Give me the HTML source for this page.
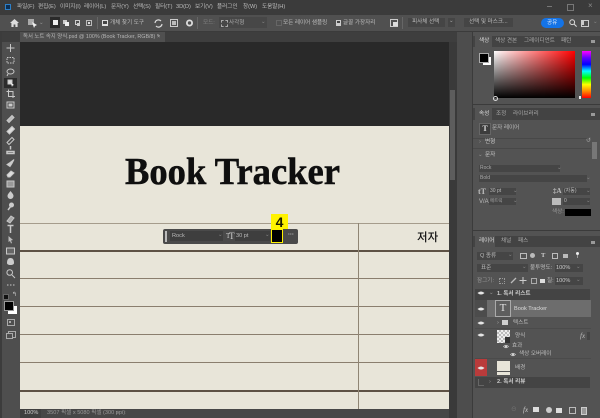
<!DOCTYPE html>
<html lang="ko"><head><meta charset="utf-8"><title>Photoshop</title>
<style>
html,body{margin:0;padding:0;background:#535353}
#r{position:relative;width:600px;height:418px;overflow:hidden;background:#4f4f4f;font-family:"Liberation Sans","Noto Sans CJK KR",sans-serif;color:#c4c4c4;filter:blur(.35px)}
#r div,#r svg{position:absolute}
.t{font-size:5.6px;line-height:8px;white-space:nowrap;color:#bdbdbd}
.l{background:#8a7e6e;height:1px;left:20px;width:429px}
.d{background:#5e5245;height:2px;left:20px;width:429px}
svg{overflow:visible}
</style></head><body><div id="r">

<!-- title bar -->
<div style="left:0;top:0;width:600px;height:15px;background:#3b3b3b"></div>
<div style="left:5px;top:4px;width:6px;height:6px;background:#0c2f54;border:1px solid #2d7fc7;box-sizing:border-box"></div>
<div class="t" style="left:17px;top:3px">파일(F)</div>
<div class="t" style="left:38px;top:3px">편집(E)</div>
<div class="t" style="left:60px;top:3px">이미지(I)</div>
<div class="t" style="left:84px;top:3px">레이어(L)</div>
<div class="t" style="left:111px;top:3px">문자(Y)</div>
<div class="t" style="left:133px;top:3px">선택(S)</div>
<div class="t" style="left:155px;top:3px">필터(T)</div>
<div class="t" style="left:176px;top:3px">3D(D)</div>
<div class="t" style="left:195px;top:3px">보기(V)</div>
<div class="t" style="left:217px;top:3px">플러그인</div>
<div class="t" style="left:243px;top:3px">창(W)</div>
<div class="t" style="left:262px;top:3px">도움말(H)</div>
<div style="left:547px;top:6px;width:5px;height:1px;background:#777"></div>
<div style="left:567px;top:4px;width:5px;height:5px;border:1px solid #777"></div>
<div class="t" style="left:588px;top:2px;font-size:8px;color:#888">×</div>

<!-- options bar -->
<div style="left:0;top:15px;width:600px;height:16px;background:#505050"></div>
<div style="left:0;top:31px;width:600px;height:1px;background:#3b3b3b"></div>
<svg style="left:10px;top:19px" width="9" height="8" viewBox="0 0 9 8"><path d="M4.5 0L9 4H7.6V8H5.4V5.5H3.6V8H1.4V4H0Z" fill="#ddd"/></svg>
<svg style="left:28px;top:19px" width="9" height="9" viewBox="0 0 9 9"><rect x="0" y="0" width="6" height="6" fill="#aaa"/><path d="M4 3L9 6 7 7 6 9Z" fill="#eee"/></svg>
<div class="t" style="left:39px;top:19px;color:#999">⌄</div>
<div style="left:50px;top:17px;width:10px;height:11px;background:#2a2a2a"></div>
<div style="left:53px;top:20px;width:5px;height:5px;background:#eee"></div>
<div style="left:63px;top:20px;width:4px;height:4px;background:#ccc"></div><div style="left:65px;top:22px;width:4px;height:4px;background:#eee"></div>
<div style="left:75px;top:20px;width:3px;height:3px;border:1px solid #ccc"></div><div style="left:77px;top:23px;width:3px;height:3px;background:#ccc"></div>
<div style="left:86px;top:20px;width:4px;height:4px;border:1px solid #bbb"></div><div style="left:88px;top:22px;width:2px;height:2px;background:#ddd"></div>
<div style="left:97px;top:17px;width:1px;height:12px;background:#666"></div>
<div style="left:102px;top:20px;width:6px;height:6px;background:#ddd"></div>
<div style="left:103px;top:21px;width:4px;height:3px;background:#444"></div>
<div class="t" style="left:110px;top:19px">개체 찾기 도구</div>
<svg style="left:154px;top:19px" width="9" height="9" viewBox="0 0 9 9"><path d="M1 4a3.5 3.5 0 0 1 6-2M8 5a3.5 3.5 0 0 1-6 2" stroke="#ddd" fill="none" stroke-width="1.2"/></svg>
<div style="left:170px;top:19px;width:6px;height:6px;border:1px solid #ccc"></div><div style="left:172px;top:21px;width:4px;height:4px;background:#bbb"></div>
<svg style="left:185px;top:18px" width="9" height="10" viewBox="0 0 9 10"><circle cx="4.5" cy="5" r="2.6" fill="none" stroke="#ddd" stroke-width="1.8"/></svg>
<div style="left:197px;top:17px;width:1px;height:12px;background:#666"></div>
<div class="t" style="left:203px;top:19px;color:#808080">모드:</div>
<div style="left:219px;top:17px;width:48px;height:11px;background:#474747"></div>
<div style="left:221px;top:20px;width:5px;height:5px;border:1px dashed #aaa"></div>
<div class="t" style="left:229px;top:19px;color:#aaa">사각형</div>
<div class="t" style="left:261px;top:18px;color:#888">⌄</div>
<div style="left:276px;top:20px;width:4px;height:4px;border:1px solid #666"></div>
<div class="t" style="left:283px;top:19px">모든 레이어 샘플링</div>
<div style="left:336px;top:20px;width:5px;height:6px;background:#ccc"></div>
<div style="left:337px;top:21px;width:3px;height:2px;background:#444"></div>
<div class="t" style="left:343px;top:19px">글꼴 가장자리</div>
<div style="left:390px;top:19px;width:6px;height:6px;border:1px solid #ccc"></div>
<div style="left:393px;top:22px;width:5px;height:4px;background:#ddd"></div>
<div style="left:402px;top:17px;width:1px;height:12px;background:#666"></div>
<div style="left:408px;top:18px;width:37px;height:9px;background:#454545"></div>
<div class="t" style="left:412px;top:18px">피사체 선택</div>
<div style="left:448px;top:18px;width:7px;height:9px;background:#454545"></div>
<div class="t" style="left:449px;top:17px;color:#aaa">⌄</div>
<div style="left:464px;top:18px;width:49px;height:9px;background:#454545"></div>
<div class="t" style="left:469px;top:18px">선택 및 마스크...</div>
<div style="left:541px;top:18px;width:23px;height:10px;background:#1473e6;border-radius:5px"></div>
<div class="t" style="left:547px;top:19px;color:#e8f0fa">공유</div>
<svg style="left:569px;top:19px" width="8" height="8" viewBox="0 0 8 8"><circle cx="3.2" cy="3.2" r="2.4" fill="none" stroke="#ddd"/><path d="M5 5L7.6 7.6" stroke="#ddd"/></svg>
<div style="left:581px;top:20px;width:6px;height:5px;border:1px solid #ccc"></div><div style="left:582px;top:21px;width:2px;height:4px;background:#ccc"></div>
<div class="t" style="left:593px;top:18px;color:#888">⌄</div>

<!-- doc tab -->
<div style="left:0;top:32px;width:473px;height:10px;background:#3e3e3e"></div>
<div style="left:20px;top:32px;width:145px;height:10px;background:#505050"></div>
<div class="t" style="left:23px;top:33px;color:#b5b5b5;font-size:5.4px">독서 노트 속지 양식.psd @ 100% (Book Tracker, RGB/8) *</div>
<div class="t" style="left:157px;top:33px;color:#bbb">×</div>

<!-- left toolbar -->
<div style="left:0;top:42px;width:20px;height:376px;background:#4e4e4e"></div>
<div style="left:0;top:32px;width:2px;height:386px;background:#3c3c3c"></div>
<div style="left:4px;top:78px;width:13px;height:10px;background:#2c2c2c"></div>
<svg style="left:0;top:0" width="20" height="418" viewBox="0 0 20 418" fill="none" stroke="#c8c8c8" stroke-width="1">
<path d="M10.500 44v8M6.500 48h8"/>
<rect x="7" y="57.500" width="7" height="5.500" stroke-dasharray="1.500 1"/>
<ellipse cx="10.500" cy="71.500" rx="3.500" ry="2.500"/><path d="M8 74l-1 2"/>
<path d="M8 80h4v4H8z" fill="#ddd"/><path d="M11 83l3 2-1.500.5-.5 1.500z" fill="#fff" stroke="none"/>
<path d="M8.500 89.500v7h6.500M6.500 91.500h6.500v6.500"/>
<rect x="7" y="102" width="7" height="6"/><rect x="9" y="104" width="3" height="2" fill="#ccc"/>
<path d="M7 120.500l5-5 2 2-5 5z" fill="#bbb"/>
<path d="M7 131.500l5-5 2.500 2.500-5 5z" fill="#ddd"/>
<path d="M7 142.500l5-5 2 2-5 5z"/>
<path d="M10.500 146v3.500M7 151.500h7v2H7z" stroke-width="1.500"/>
<path d="M7 164.500l3-2 4-3-2 4-2 3z" fill="#ccc"/>
<path d="M7 175l4-4 3 2-4 4H8z" fill="#ddd"/>
<rect x="7" y="181" width="7" height="6" fill="#999"/>
<path d="M10.500 191c2 2.500 3 3.500 3 5a3 3 0 0 1-6 0c0-1.500 1-2.500 3-5z" fill="#ccc" stroke="none"/>
<path d="M8 210l3-4" stroke-width="1.500"/><circle cx="11.500" cy="205" r="2.500" fill="#ccc" stroke="none"/>
<path d="M7 221l4-5 3 2-4 5z" fill="#aaa"/>
<path d="M7.500 225.500h6M10.500 225.500v7.500" stroke-width="1.500"/>
<path d="M8.500 236l4.500 4-2 .5 1 2.500-1 .5-1-2.500-1.500 1z" fill="#bbb" stroke="none"/>
<rect x="6.500" y="248" width="8" height="6" fill="#666"/>
<path d="M7 263c0-3 1-5 3.500-5s3.500 2 3.500 5c0 1-1 2-3.500 2S7 264 7 263z" fill="#ccc" stroke="none"/>
<circle cx="9.700" cy="272.500" r="2.800"/><path d="M12 275l3 3"/>
<path d="M7 285h1.500M10 285h1.500M13 285h1.500"/>
</svg>
<div style="left:3px;top:294px;width:4px;height:4px;background:#111;border:1px solid #666"></div>
<div class="t" style="left:12px;top:291px;font-size:6px;color:#ccc">↰</div>
<div style="left:8px;top:306px;width:9px;height:8px;background:#fff"></div>
<div style="left:4px;top:301px;width:8px;height:8px;background:#000;border:.5px solid #999"></div>
<div style="left:7px;top:319px;width:6px;height:5px;border:1px solid #aaa"></div>
<div style="left:9px;top:321px;width:2px;height:2px;background:#aaa"></div>
<div style="left:8px;top:331px;width:6px;height:5px;border:1px solid #aaa"></div>
<div style="left:6px;top:333px;width:5px;height:4px;border:1px solid #aaa;background:#4e4e4e"></div>

<!-- canvas -->
<div style="left:20px;top:42px;width:429px;height:84px;background:#292929"></div>
<div style="left:20px;top:126px;width:429px;height:283px;background:#e8e5d9"></div>
<div class="l" style="top:223px;background:#a59c8c"></div>
<div class="d" style="top:250px"></div>
<div class="l" style="top:278px"></div>
<div class="l" style="top:306px"></div>
<div class="l" style="top:334px"></div>
<div class="l" style="top:362px"></div>
<div class="d" style="top:390px"></div>
<div style="left:358px;top:223px;width:1px;height:186px;background:#8f8574"></div>
<svg style="left:0;top:0" width="600" height="418"><text x="125" y="184" font-family="'Liberation Serif',serif" font-weight="700" font-size="38" fill="#0f0f0f" stroke="#0f0f0f" stroke-width=".5" textLength="215" lengthAdjust="spacingAndGlyphs">Book Tracker</text></svg>
<div style="left:417px;top:230px;font-size:11.500px;line-height:15px;color:#111;font-weight:500;white-space:nowrap;font-family:'Noto Sans CJK KR',sans-serif">저자</div>

<!-- context bar -->
<div style="left:163px;top:229px;width:135px;height:15px;background:#4a4a4a;border-radius:2px"></div>
<div style="left:165px;top:231px;width:2px;height:11px;background:#bbb"></div>
<div style="left:170px;top:231px;width:53px;height:10px;background:#3e3e3e"></div>
<div class="t" style="left:172px;top:232px;color:#bbb">Rock</div>
<div class="t" style="left:218px;top:231px;color:#888">⌄</div>
<div class="t" style="left:226px;top:232px;font-size:7px;color:#ccc;font-family:'Liberation Serif',serif">T</div>
<div class="t" style="left:229px;top:232px;font-size:9px;color:#ccc;font-family:'Liberation Serif',serif">T</div>
<div style="left:235px;top:231px;width:35px;height:10px;background:#3e3e3e"></div>
<div class="t" style="left:236px;top:232px;color:#bbb">30 pt</div>
<div class="t" style="left:265px;top:231px;color:#888">⌄</div>
<div style="left:271px;top:214px;width:17px;height:15px;background:#fff200"></div>
<div style="left:271px;top:229px;width:12px;height:14px;background:#000;border:1.500px solid #fff200;box-sizing:border-box"></div>
<div style="left:271px;top:214px;width:17px;height:16px;text-align:center;font-size:14px;line-height:16px;font-weight:700;color:#1a1a00">4</div>
<div class="t" style="left:288px;top:231px;color:#ccc;font-size:6px;font-weight:700">···</div>

<!-- status bar -->
<div style="left:20px;top:409px;width:429px;height:9px;background:#474747"></div>
<div style="left:20px;top:409px;width:21px;height:9px;background:#3f3f3f"></div>
<div class="t" style="left:24px;top:409px;color:#ccc">100%</div>
<div class="t" style="left:47px;top:409px;color:#999">3507 픽셀 x 5080 픽셀 (300 ppi)</div>
<div class="t" style="left:116px;top:409px;color:#999">›</div>
<div class="t" style="left:124px;top:409px;color:#777">‹</div>

<!-- scrollbar & dark columns -->
<div style="left:449px;top:42px;width:8px;height:376px;background:#3a3a3a"></div>
<div style="left:450px;top:90px;width:5px;height:90px;background:#5d5d5d"></div>
<div style="left:457px;top:32px;width:16px;height:386px;background:#4d4d4d"></div>
<div style="left:472px;top:32px;width:1px;height:386px;background:#3b3b3b"></div>

<!-- right panels -->
<div style="left:473px;top:32px;width:127px;height:386px;background:#535353"></div>
<!-- color panel -->
<div style="left:473px;top:36px;width:127px;height:11px;background:#434343"></div>
<div style="left:475px;top:36px;width:17px;height:11px;background:#535353"></div>
<div class="t" style="left:479px;top:37px;color:#ddd">색상</div>
<div class="t" style="left:495px;top:37px;color:#aaa">색상 견본</div>
<div class="t" style="left:524px;top:37px;color:#aaa">그레이디언트</div>
<div class="t" style="left:561px;top:37px;color:#aaa">패턴</div>
<div style="left:591px;top:40px;width:4px;height:3px;background:#999"></div>
<div style="left:483px;top:57px;width:8px;height:8px;background:#fff"></div>
<div style="left:479px;top:53px;width:8px;height:8px;background:#000;border:.5px solid #aaa"></div>
<div style="left:494px;top:51px;width:81px;height:47px;background:linear-gradient(to bottom,transparent,#000),linear-gradient(to right,#fff,#f00)"></div>
<div style="left:582px;top:51px;width:9px;height:47px;background:linear-gradient(to bottom,#f0f,#60f,#00f,#0ff,#0f0,#ff0,#f80,#f00)"></div>
<div style="left:579px;top:96px;width:2px;height:3px;background:#eee"></div>
<div style="left:493px;top:96px;width:3px;height:3px;border:.5px solid #ddd;border-radius:50%"></div>
<div style="left:473px;top:104px;width:127px;height:1px;background:#3b3b3b"></div>

<!-- properties -->
<div style="left:473px;top:108px;width:127px;height:12px;background:#434343"></div>
<div style="left:475px;top:108px;width:17px;height:12px;background:#535353"></div>
<div class="t" style="left:479px;top:110px;color:#ddd">속성</div>
<div class="t" style="left:496px;top:110px;color:#aaa">조정</div>
<div class="t" style="left:513px;top:110px;color:#aaa">라이브러리</div>
<div style="left:591px;top:113px;width:4px;height:3px;background:#999"></div>
<div style="left:479px;top:123px;width:10px;height:10px;background:#3d3d3d;border:.5px solid #666;text-align:center;font:700 8px/10px 'Liberation Serif',serif;color:#ddd">T</div>
<div class="t" style="left:492px;top:124px">문자 레이어</div>
<div style="left:473px;top:138px;width:118px;height:1px;background:#484848"></div>
<div class="t" style="left:479px;top:138px;color:#999">›</div>
<div class="t" style="left:485px;top:138px;color:#ccc">변형</div>
<div class="t" style="left:586px;top:137px;color:#aaa;font-size:6px">↺</div>
<div style="left:473px;top:148px;width:118px;height:1px;background:#484848"></div>
<div class="t" style="left:478px;top:151px;color:#999">⌄</div>
<div class="t" style="left:485px;top:151px;color:#ccc">문자</div>
<div style="left:479px;top:165px;width:81px;height:7px;background:#454545"></div>
<div class="t" style="left:480px;top:164px;color:#aaa;font-size:5px">Rock</div>
<div class="t" style="left:557px;top:164px;color:#888">⌄</div>
<div style="left:479px;top:175px;width:108px;height:7px;background:#454545"></div>
<div class="t" style="left:480px;top:174px;color:#aaa;font-size:5px">Bold</div>
<div class="t" style="left:586px;top:174px;color:#888">⌄</div>
<div class="t" style="left:478px;top:187px;font:700 8px/9px 'Liberation Serif',serif;color:#bbb">tT</div>
<div style="left:489px;top:188px;width:27px;height:7px;background:#454545"></div>
<div class="t" style="left:490px;top:187px;color:#bbb;font-size:5px">30 pt</div>
<div class="t" style="left:513px;top:187px;color:#888">⌄</div>
<div class="t" style="left:479px;top:198px;font-size:6px;color:#bbb">V/A</div>
<div style="left:489px;top:198px;width:27px;height:7px;background:#454545"></div>
<div class="t" style="left:490px;top:197px;color:#aaa;font-size:4.500px">메트릭</div>
<div class="t" style="left:513px;top:197px;color:#888">⌄</div>
<div class="t" style="left:553px;top:187px;font:700 7px/9px 'Liberation Serif',serif;color:#bbb">‡A</div>
<div style="left:563px;top:188px;width:27px;height:7px;background:#454545"></div>
<div class="t" style="left:564px;top:187px;color:#bbb;font-size:5px">(자동)</div>
<div class="t" style="left:586px;top:187px;color:#888">⌄</div>
<div style="left:552px;top:198px;width:9px;height:7px;background:#bbb"></div>
<div style="left:563px;top:198px;width:27px;height:7px;background:#454545"></div>
<div class="t" style="left:564px;top:197px;color:#bbb;font-size:5px">0</div>
<div class="t" style="left:586px;top:197px;color:#888">⌄</div>
<div class="t" style="left:552px;top:208px;color:#999">색상:</div>
<div style="left:565px;top:209px;width:26px;height:7px;background:#000"></div>
<div style="left:592px;top:142px;width:5px;height:17px;background:#777"></div>
<div style="left:473px;top:230px;width:127px;height:1px;background:#3b3b3b"></div>

<!-- layers -->
<div style="left:473px;top:236px;width:127px;height:11px;background:#434343"></div>
<div style="left:475px;top:236px;width:20px;height:11px;background:#535353"></div>
<div class="t" style="left:479px;top:237px;color:#ddd">레이어</div>
<div class="t" style="left:501px;top:237px;color:#aaa">채널</div>
<div class="t" style="left:518px;top:237px;color:#aaa">패스</div>
<div style="left:591px;top:241px;width:4px;height:3px;background:#999"></div>
<div style="left:477px;top:252px;width:36px;height:8px;background:#454545"></div>
<div class="t" style="left:480px;top:252px;color:#bbb">Q 종류</div>
<div class="t" style="left:508px;top:251px;color:#888">⌄</div>
<div style="left:520px;top:253px;width:5px;height:4px;border:1px solid #bbb"></div>
<div style="left:530px;top:253px;width:5px;height:5px;background:#bbb;border-radius:50%"></div>
<div class="t" style="left:541px;top:252px;color:#ccc;font:700 6.500px/8px 'Liberation Serif',serif">T</div>
<div style="left:552px;top:253px;width:4px;height:4px;border:1px solid #bbb"></div>
<div style="left:563px;top:254px;width:5px;height:4px;background:#bbb"></div>
<div style="left:576px;top:252px;width:3px;height:3px;background:#eee;border-radius:50%"></div>
<div style="left:577px;top:255px;width:1px;height:3px;background:#999"></div>
<div style="left:477px;top:264px;width:51px;height:8px;background:#454545"></div>
<div class="t" style="left:481px;top:264px">표준</div>
<div class="t" style="left:522px;top:263px;color:#888">⌄</div>
<div class="t" style="left:530px;top:264px">불투명도:</div>
<div style="left:555px;top:264px;width:28px;height:8px;background:#454545"></div>
<div class="t" style="left:556px;top:264px;color:#ccc">100%</div>
<div class="t" style="left:576px;top:263px;color:#888">⌄</div>
<div class="t" style="left:477px;top:277px;color:#999">잠그기:</div>
<div style="left:499px;top:278px;width:4px;height:4px;border:1px dotted #999"></div>
<svg style="left:510px;top:277px" width="8" height="7"><path d="M1 6L6 1" stroke="#bbb" stroke-width="1.300"/></svg>
<svg style="left:519px;top:277px" width="8" height="7"><path d="M4 0v7M.5 3.500h7" stroke="#ccc"/></svg>
<div style="left:531px;top:278px;width:4px;height:4px;border:1px solid #aaa"></div>
<div style="left:540px;top:279px;width:5px;height:4px;background:#ddd"></div>
<div class="t" style="left:547px;top:277px;color:#bbb">칠:</div>
<div style="left:555px;top:277px;width:28px;height:8px;background:#454545"></div>
<div class="t" style="left:556px;top:277px;color:#ccc">100%</div>
<div class="t" style="left:576px;top:276px;color:#888">⌄</div>

<div style="left:475px;top:289px;width:115px;height:11px;background:#444"></div>
<div class="t" style="left:489px;top:289px;color:#999">⌄</div>
<div class="t" style="left:497px;top:290px;color:#ccc;font-weight:700">1. 독서 리스트</div>
<div style="left:475px;top:300px;width:12px;height:17px;background:#4c4c4c"></div>
<div style="left:487px;top:300px;width:104px;height:17px;background:#6d6d6d"></div>
<div style="left:495px;top:300px;width:16px;height:17px;background:#5e5e5e;border:.7px solid #aaa;box-sizing:border-box;text-align:center;font:11px/15px 'Liberation Serif',serif;color:#e6e6e6">T</div>
<div class="t" style="left:514px;top:305px;color:#ddd">Book Tracker</div>
<div class="t" style="left:497px;top:319px;color:#aaa">›</div>
<div style="left:502px;top:320px;width:6px;height:5px;background:#d0d0d0"></div>
<div class="t" style="left:513px;top:319px">텍스트</div>
<div style="left:475px;top:328px;width:116px;height:1px;background:#4b4b4b"></div>
<div style="left:497px;top:330px;width:13px;height:13px;background:repeating-conic-gradient(#bbb 0 25%,#eee 0 50%) 0 0/4px 4px"></div>
<div style="left:505px;top:337px;width:5px;height:6px;background:#333"></div>
<div class="t" style="left:515px;top:332px">양식</div>
<div class="t" style="left:580px;top:332px;font-style:italic;font-family:'Liberation Serif',serif;font-size:7px">fx</div>
<div style="left:587px;top:332px;width:3px;height:8px;background:#444"></div>
<svg style="left:503px;top:344px" width="6" height="5"><path d="M.5 2.500Q3 0 5.500 2.500 3 5 .5 2.500Z" fill="none" stroke="#ccc" stroke-width=".7"/><circle cx="3" cy="2.500" r="1" fill="#ddd"/></svg>
<div class="t" style="left:512px;top:342px">효과</div>
<svg style="left:510px;top:352px" width="6" height="5"><path d="M.5 2.500Q3 0 5.500 2.500 3 5 .5 2.500Z" fill="none" stroke="#ccc" stroke-width=".7"/><circle cx="3" cy="2.500" r="1" fill="#ddd"/></svg>
<div class="t" style="left:519px;top:350px">색상 오버레이</div>
<div style="left:475px;top:358px;width:116px;height:1px;background:#4b4b4b"></div>
<div style="left:475px;top:359px;width:12px;height:17px;background:#b93b3b"></div>
<div style="left:497px;top:361px;width:13px;height:14px;background:#e8e5d9"></div>
<div style="left:497px;top:371px;width:13px;height:1px;background:#555"></div>
<div class="t" style="left:515px;top:364px">배경</div>
<div style="left:475px;top:377px;width:115px;height:11px;background:#444"></div>
<div style="left:478px;top:379px;width:5px;height:6px;border-left:1px solid #666;border-bottom:1px solid #666"></div>
<div class="t" style="left:489px;top:378px;color:#999">›</div>
<div class="t" style="left:497px;top:378px;color:#ccc;font-weight:700">2. 독서 리뷰</div>
<!-- eyes -->
<svg style="left:477px;top:0" width="8" height="418" fill="#e6e6e6"><g stroke="#e6e6e6" stroke-width=".6"><path d="M1 293Q4 290.500 7 293 4 295.500 1 293Z"/><path d="M1 309Q4 306.500 7 309 4 311.500 1 309Z"/><path d="M1 323Q4 320.500 7 323 4 325.500 1 323Z"/><path d="M1 335Q4 332.500 7 335 4 337.500 1 335Z"/><path d="M1 368Q4 365.500 7 368 4 370.500 1 368Z"/></g></svg>
<!-- bottom icons -->
<div class="t" style="left:511px;top:406px;color:#777">⊖</div>
<div class="t" style="left:523px;top:406px;font-family:'Liberation Serif',serif;font-style:italic;font-size:7px;color:#ccc">fx</div>
<div style="left:533px;top:407px;width:6px;height:5px;background:#ddd"></div>
<div style="left:546px;top:407px;width:6px;height:6px;background:#ccc;border-radius:50%"></div>
<div style="left:556px;top:408px;width:6px;height:5px;background:#ddd"></div>
<div style="left:569px;top:407px;width:5px;height:5px;border:1px solid #bbb"></div>
<div style="left:581px;top:407px;width:4px;height:6px;background:#999;border:.5px solid #ccc"></div>
</div></body></html>
